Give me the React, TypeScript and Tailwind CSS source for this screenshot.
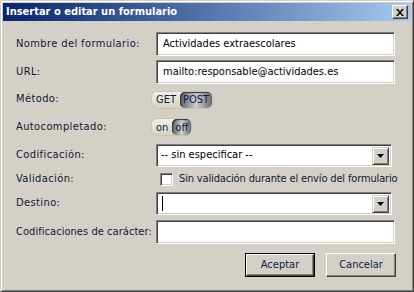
import React from "react";

const font = "font-['DejaVu_Sans_Condensed','DejaVu_Sans',sans-serif]";

const sunken =
  "border border-t-[#808080] border-l-[#808080] border-b-white border-r-white shadow-[inset_1px_1px_0_#404040,inset_-1px_-1px_0_#d4d0c8] bg-white";

function Field({ label, h, tight, children }: { label: string; h: string; tight?: boolean; children: React.ReactNode }) {
  return (
    <div className={`flex items-center ${h}`}>
      <div className={`w-[140px] shrink-0 whitespace-nowrap ${tight ? "tracking-[0.05px]" : "tracking-[0.4px]"}`}>{label}</div>
      <div className="flex-1 flex items-center">{children}</div>
    </div>
  );
}

function TextBox({ value }: { value?: string }) {
  return (
    <div className={`${sunken} h-[24px] w-[239px] flex items-center pl-[6px] text-[11px] text-black`}>
      {value}
    </div>
  );
}

function Arrow() {
  return (
    <div className="w-[17px] h-[18px] bg-[#d4d0c8] border border-t-[#d4d0c8] border-l-[#d4d0c8] border-b-[#404040] border-r-[#404040] shadow-[inset_1px_1px_0_#fff,inset_-1px_-1px_0_#808080] flex items-center justify-center">
      <svg width="7" height="4" viewBox="0 0 7 4">
        <path d="M0 0h7L3.5 4z" fill="#000" />
      </svg>
    </div>
  );
}

function Select({ value, caret }: { value?: string; caret?: boolean }) {
  return (
    <div className={`${sunken} h-[23px] w-[236px] flex items-center pl-[4px] pr-[2px] text-[11px] text-black`}>
      <div className="flex-1 flex items-center">
        {caret && <span className="ml-[1px] w-px h-[15px] bg-black" />}
        {value}
      </div>
      <Arrow />
    </div>
  );
}

function Toggle({ a, b }: { a: string; b: string }) {
  return (
    <div className="ml-[-4px] inline-flex h-[16px] rounded-[5px] bg-gradient-to-b from-[#f2f0e6] to-[#d6d2bc] shadow-[0_0_0_1px_#c8c4b4] text-[11px] text-[#0b1a4a] leading-none">
      <div className="px-[4px] flex items-center">{a}</div>
      <div className="px-[3px] flex items-center rounded-[5px] bg-gradient-to-r from-[#5a5d60] via-[#cfcfcc] to-[#6a6d70] shadow-[inset_1px_1px_1px_#30343c]">
        <span>{b}</span>
      </div>
    </div>
  );
}

function Button({ children, def }: { children: React.ReactNode; def?: boolean }) {
  return (
    <div className={def ? "border border-black" : ""}>
      <div className={`${def ? "w-[68px] h-[22px]" : "w-[70px] h-[24px]"} bg-[#d4d0c8] border border-t-white border-l-white border-b-[#404040] border-r-[#404040] shadow-[inset_-1px_-1px_0_#808080] flex items-center justify-center text-[11px] text-[#0b1a4a]`}>
        {children}
      </div>
    </div>
  );
}

export default function App() {
  return (
    <div className={`${font} w-[414px] h-[292px] bg-[#d4d0c8] border border-t-[#d4d0c8] border-l-[#d4d0c8] border-b-[#404040] border-r-[#404040] shadow-[inset_1px_1px_0_#fff,inset_-1px_-1px_0_#808080] p-[2px] flex flex-col text-[11px] text-[#101830]`}>
      <div className="h-[18px] flex items-center justify-between bg-gradient-to-r from-[#0a246a] to-[#a6caf0] pl-[3px] pr-[3px]">
        <span className="text-white font-bold text-[11px]">Insertar o editar un formulario</span>
        <div className="w-[16px] h-[14px] bg-[#d4d0c8] border border-t-white border-l-white border-b-[#404040] border-r-[#404040] shadow-[inset_-1px_-1px_0_#808080] flex items-center justify-center">
          <svg width="8" height="7" viewBox="0 0 8 7">
            <path d="M0 0h2l2 2.5L6 0h2L5 3.5 8 7H6L4 4.5 2 7H0l3-3.5z" fill="#000" />
          </svg>
        </div>
      </div>

      <div className="flex-1 flex flex-col pl-[13px] pt-[11px]">
        <Field label="Nombre del formulario:" h="h-[24px]">
          <TextBox value="Actividades extraescolares" />
        </Field>
        <div className="h-[4px]" />
        <Field label="URL:" h="h-[24px]">
          <TextBox value="mailto:responsable@actividades.es" />
        </Field>
        <Field label="Método:" h="h-[31px]">
          <Toggle a="GET" b="POST" />
        </Field>
        <Field label="Autocompletado:" h="h-[24px]">
          <Toggle a="on" b="off" />
        </Field>
        <div className="h-[5px]" />
        <Field label="Codificación:" h="h-[23px]">
          <Select value="-- sin especificar --" />
        </Field>
        <Field label="Validación:" h="h-[25px]">
          <div className="flex items-center pl-[4px]">
            <div className="w-[13px] h-[13px] bg-white border border-t-[#808080] border-l-[#808080] border-b-white border-r-white shadow-[inset_1px_1px_0_#404040,inset_-1px_-1px_0_#d4d0c8]" />
            <span className="ml-[6px] whitespace-nowrap tracking-[-0.15px]">Sin validación durante el envío del formulario</span>
          </div>
        </Field>
        <Field label="Destino:" h="h-[23px]">
          <Select caret />
        </Field>
        <div className="h-[5px]" />
        <Field label="Codificaciones de carácter:" h="h-[24px]" tight>
          <TextBox />
        </Field>
        <div className="flex justify-end gap-[11px] pr-[15px] mt-[9px]">
          <Button def>Aceptar</Button>
          <Button>Cancelar</Button>
        </div>
      </div>
    </div>
  );
}
